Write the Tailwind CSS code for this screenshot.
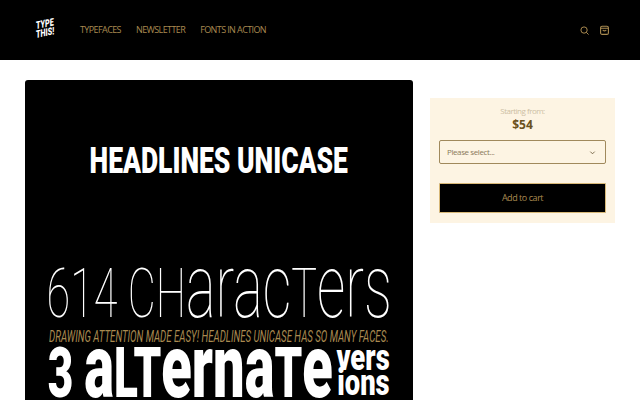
<!DOCTYPE html>
<html><head><meta charset="utf-8">
<script src="https://cdn.jsdelivr.net/npm/@tailwindcss/browser@4"></script>
</head>
<body class="bg-white h-[400px] overflow-hidden font-['Open_Sans',sans-serif]">
<header class="h-[60px] bg-black flex items-center pl-[36px] pr-[31px]">
  <a class="w-[18px] text-white font-['Roboto',sans-serif] font-black text-[10.5px] leading-[9px] -skew-y-[8deg] scale-x-[0.68] origin-left whitespace-nowrap">TYPE<br>THIS!</a>
  <nav class="flex gap-[15px] ml-[26px] text-[9px] tracking-[-0.6px] text-[#a98a50] uppercase">
    <a>Typefaces</a><a>Newsletter</a><a>Fonts in action</a>
  </nav>
  <div class="ml-auto flex items-center gap-[11px]">
    <svg class="w-[9px] h-[9px]" viewBox="0 0 10 10" fill="none" stroke="#a98a50" stroke-width="1.100"><circle cx="4.500" cy="4.500" r="3.500"/><path d="M7 7l2.500 2.500"/></svg>
    <svg class="w-[9px] h-[10px]" viewBox="0 0 9 10" fill="none" stroke="#a98a50" stroke-width="1.100"><rect x=".6" y="1.200" width="7.800" height="8.200" rx="1.500"/><path d="M.6 3.200h7.800M2.800 4.800c.4 1.400 3 1.400 3.400 0"/></svg>
  </div>
</header>
<main class="flex items-start px-[25px] pt-[20px] gap-[17px]">
  <div class="w-[388px] h-[388px] shrink-0 bg-black rounded-t-[3px] overflow-hidden flex flex-col items-center text-white font-['Roboto',sans-serif] whitespace-nowrap">
    <div class="mt-[59px] h-[45px] leading-[45px] text-[36px] font-black scale-x-[0.735]">HEADLINES UNICASE</div>
    <div class="mt-[61px] h-[84px] leading-[84px] text-[69px] font-thin scale-x-[0.625]">614 CH<span class="text-[1.3em]">arac</span>T<span class="text-[1.3em]">ers</span></div>
    <div class="mt-[-1px] h-[17px] leading-[17px] text-[17px] italic text-[#a98a50] scale-x-[0.57]">DRAWING ATTENTION MADE EASY! HEADLINES UNICASE HAS SO MANY FACES.</div>
    <div class="mt-[-8px] w-full flex items-start justify-center gap-[6px] pl-[1px]">
      <div class="w-[281px] flex justify-center h-[60px] leading-[60px] text-[70px] font-black"><span class="scale-x-[0.63]">3 <span class="text-[1.27em]">a</span>LT<span class="text-[1.27em]">ern</span><span class="text-[1.27em]">a</span>T<span class="text-[1.27em]">e</span></span></div>
      <div class="mt-[9px] w-[53px] flex flex-col items-center text-[36px] leading-[25px] font-black"><span class="scale-x-[0.76]">vers</span><span class="scale-x-[0.76]">ions</span></div>
    </div>
  </div>
  <aside class="w-[185px] h-[125px] mt-[18px] bg-[#fdf4e3] px-[9px] flex flex-col items-center">
    <p class="mt-[7px] text-[8px] tracking-[-0.5px] leading-[12px] text-[#cdbfa3]">Starting from:</p>
    <p class="text-[12px] leading-[16px] font-bold text-[#6b5220]">$54</p>
    <div class="mt-[7px] w-full h-[24px] border border-[#a0895c] rounded-[2px] flex items-center justify-between pl-[7px] pr-[9px] text-[8px] tracking-[-0.4px] text-[#8a7a5a]">
      <span>Please select...</span>
      <svg class="w-[7px] h-[7px]" viewBox="0 0 8 8" fill="none" stroke="#6b5a3a" stroke-width="1"><path d="M1.500 3l2.500 2.500L6.500 3"/></svg>
    </div>
    <button class="mt-[19px] w-full h-[30px] bg-black border border-[#d8b877] rounded-[1px] text-[9px] tracking-[-0.45px] text-[#a98a50]">Add to cart</button>
  </aside>
</main>
</body></html>
